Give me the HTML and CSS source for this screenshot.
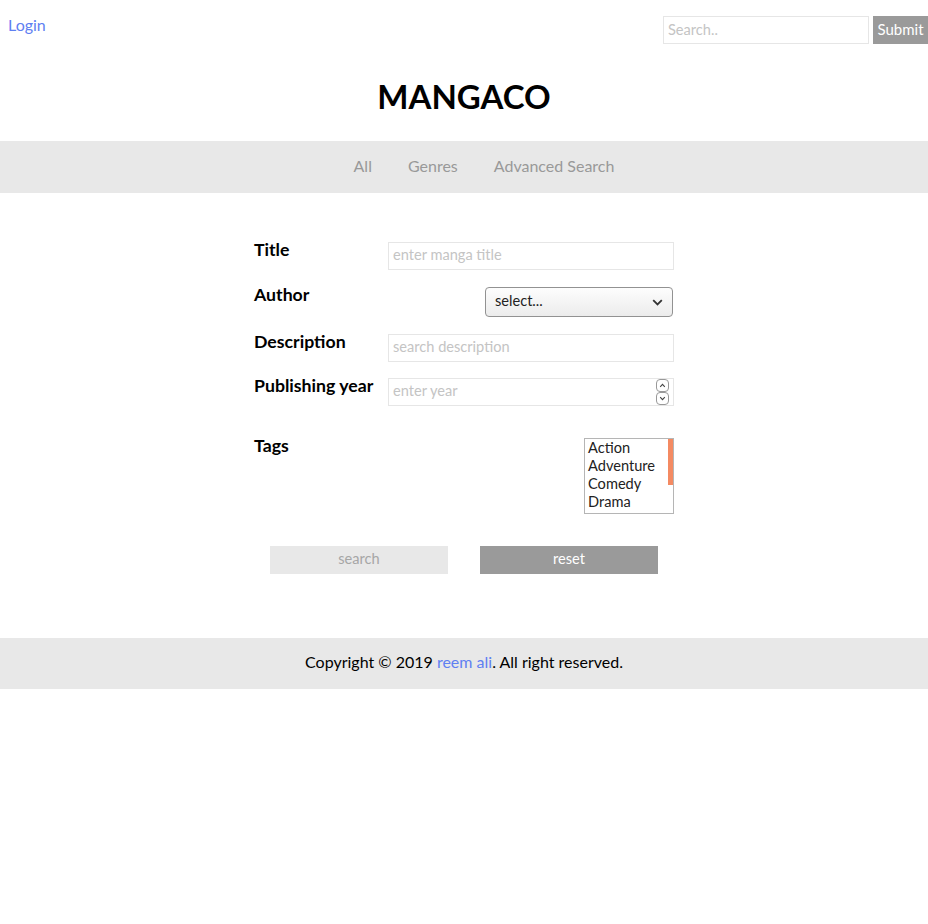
FILE: index.html
```html
<!DOCTYPE html>
<html>
<head>
<meta charset="utf-8">
<link rel="stylesheet" href="styles.css">
</head>
<body>
<header class="top">
  <a class="login" href="#">Login</a>
  <form class="search-form">
    <input class="search-input" type="text" placeholder="Search..">
    <button class="search-submit" type="button">Submit</button>
  </form>
</header>
<h1 class="brand">MANGACO</h1>
<nav class="nav">
  <a href="#">All</a>
  <a href="#">Genres</a>
  <a href="#">Advanced Search</a>
</nav>
<main class="main">
  <form class="adv">
    <div class="row row-title">
      <label class="lbl">Title</label>
      <input class="field" type="text" placeholder="enter manga title">
    </div>
    <div class="row">
      <label class="lbl">Author</label>
      <div class="select">
        <span>select...</span>
        <svg width="11" height="7" viewBox="0 0 11 7"><path d="M1.2 1.2 L5.5 5.5 L9.8 1.2" fill="none" stroke="#333" stroke-width="1.8"/></svg>
      </div>
    </div>
    <div class="row">
      <label class="lbl">Description</label>
      <input class="field" type="text" placeholder="search description">
    </div>
    <div class="row">
      <label class="lbl">Publishing year</label>
      <div class="field-wrap">
        <input class="field" type="text" placeholder="enter year">
        <div class="spin">
          <svg width="13" height="13" viewBox="0 0 13 13"><rect x="0.5" y="0.5" width="12" height="12" rx="3.5" fill="#fff" stroke="#999"/><path d="M4.2 7.8 L6.5 5.4 L8.8 7.8" fill="none" stroke="#444" stroke-width="1.1"/></svg>
          <svg width="13" height="13" viewBox="0 0 13 13"><rect x="0.5" y="0.5" width="12" height="12" rx="3.5" fill="#fff" stroke="#999"/><path d="M4.2 5.2 L6.5 7.6 L8.8 5.2" fill="none" stroke="#444" stroke-width="1.1"/></svg>
        </div>
      </div>
    </div>
    <div class="row tags-row">
      <label class="lbl">Tags</label>
      <div class="listbox">
        <div class="opt">Action</div>
        <div class="opt">Adventure</div>
        <div class="opt">Comedy</div>
        <div class="opt">Drama</div>
        <span class="thumb"></span>
      </div>
    </div>
    <div class="buttons">
      <button class="btn btn-search" type="button">search</button>
      <button class="btn btn-reset" type="button">reset</button>
    </div>
  </form>
</main>
<footer class="footer">
  <p class="copy">Copyright © 2019 <a href="#">reem ali</a>. All right reserved.</p>
</footer>
</body>
</html>
```
FILE: styles.css
```css
* { box-sizing: border-box; }
body {
  margin: 0;
  font-family: Lato, "Open Sans", sans-serif;
  font-size: 16px;
  color: #000;
  background: #fff;
}
a { text-decoration: none; color: #5f80f2; }
.top {
  display: flex;
  justify-content: space-between;
  align-items: flex-start;
  padding: 0 0 0 8px;
  height: 60px;
}
.login { margin-top: 15px; line-height: 20px; }
.search-form { display: flex; gap: 4px; margin-top: 16px; }
.search-input {
  width: 206px;
  height: 28px;
  border: 1px solid #e6e6e6;
  padding: 0 4px 1px;
  font-family: inherit;
  font-size: 14.6px;
  outline: none;
}
.search-input::placeholder { color: #c4c4c4; }
.search-submit {
  width: 55px;
  height: 28px;
  border: none;
  background: #9a9a9a;
  color: #fff;
  font-family: inherit;
  font-size: 15px;
  padding: 0 0 2px;
}
.brand {
  margin: 15px 0 0;
  height: 66px;
  text-align: center;
  font-size: 33px;
  font-weight: 700;
  line-height: 42px;
}
.nav {
  background: #e8e8e8;
  height: 52px;
  display: flex;
  justify-content: center;
  align-items: center;
  gap: 36px;
  padding: 0 0 3px 40px;
}
.nav a { color: #999; }
.main { padding: 49px 0 64px; }
.adv { width: 420px; margin: 0 auto; display: flex; flex-direction: column; }
.row {
  display: flex;
  justify-content: space-between;
  align-items: flex-start;
  margin-bottom: 16px;
}
.row-title { margin-bottom: 17px; }
.lbl { font-weight: 700; font-size: 17.7px; line-height: 18px; margin-top: -1px; }
.field {
  width: 286px;
  height: 28px;
  border: 1px solid #e6e6e6;
  padding: 0 4px 3px;
  font-family: inherit;
  font-size: 14.6px;
  outline: none;
}
.field::placeholder { color: #c4c4c4; }
.field-wrap { position: relative; }
.spin {
  position: absolute;
  right: 5px;
  top: 1px;
  display: flex;
  flex-direction: column;
}
.spin svg { display: block; }
.select {
  width: 188px;
  height: 30px;
  margin-right: 1px;
  border: 1px solid #929292;
  border-radius: 4px;
  background: linear-gradient(#fdfdfd, #ececec);
  display: flex;
  align-items: center;
  justify-content: space-between;
  padding: 0 9px 3px 9px;
  font-size: 14.6px;
  color: #222;
  margin-bottom: 1px;
}
.select svg { margin-top: 3px; }
.tags-row { margin-top: 16px; margin-bottom: 32px; }
.listbox {
  position: relative;
  width: 90px;
  height: 76px;
  border: 1px solid #b5b5b5;
  overflow: hidden;
  padding: 0 0 0 3px;
  font-size: 14.6px;
  color: #222;
}
.thumb {
  position: absolute;
  right: 0;
  top: 0;
  width: 5px;
  height: 46px;
  background: #f48a62;
}
.opt { line-height: 18px; }
.buttons {
  display: flex;
  justify-content: center;
  gap: 32px;
}
.btn {
  width: 178px;
  height: 28px;
  border: none;
  font-family: inherit;
  font-size: 14.6px;
  padding: 0 0 4px;
}
.btn-search { background: #e8e8e8; color: #a6a6a6; }
.btn-reset { background: #9a9a9a; color: #fff; }
.footer {
  background: #e8e8e8;
  height: 51px;
  display: flex;
  justify-content: center;
  align-items: center;
}
.copy { margin: 0 0 4px; }
```
